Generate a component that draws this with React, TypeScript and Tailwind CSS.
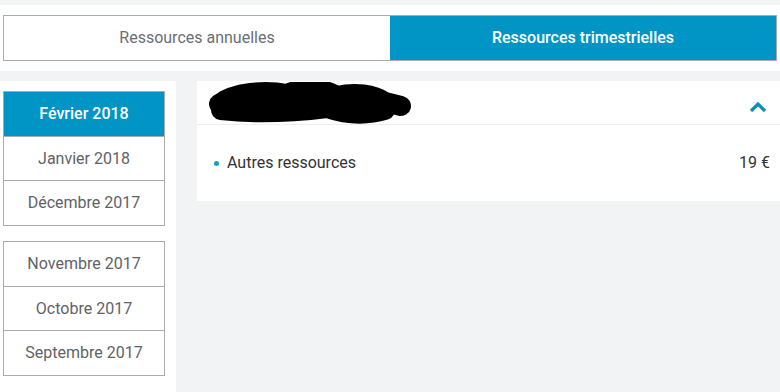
import { useState } from "react";

const groups = [
  ["Février 2018", "Janvier 2018", "Décembre 2017"],
  ["Novembre 2017", "Octobre 2017", "Septembre 2017"],
];

function Redaction() {
  return (
    <svg width="210" height="42" viewBox="0 0 210 42" className="block">
      <path
        d="M14 22 C30 10 60 8 82 12 C100 4 118 6 132 14 C150 10 168 12 180 20 L196 24 M16 28 C50 32 90 30 122 26 C140 32 160 34 180 28 M20 18 C60 16 100 20 150 20"
        stroke="#000"
        strokeWidth="20"
        strokeLinecap="round"
        fill="none"
      />
    </svg>
  );
}

export default function App() {
  const [tab, setTab] = useState("trim");
  const [month, setMonth] = useState("Février 2018");

  return (
    <div className="min-h-screen bg-[#f2f3f5] pt-[5px] font-['Roboto',sans-serif] flex flex-col">
      <div className="bg-white px-[3px] py-[10px]">
        <div className="flex h-[46px] border border-[#a9acae]">
          <button
            onClick={() => setTab("ann")}
            className={`flex-1 text-[16px] ${tab === "ann" ? "bg-[#0095c5] text-white font-medium" : "bg-white text-[#6b6e73]"}`}
          >
            Ressources annuelles
          </button>
          <button
            onClick={() => setTab("trim")}
            className={`flex-1 text-[16px] ${tab === "trim" ? "bg-[#0095c5] text-white font-medium" : "bg-white text-[#6b6e73]"}`}
          >
            Ressources trimestrielles
          </button>
        </div>
      </div>

      <div className="mt-[10px] flex flex-1 gap-[21px]">
        <div className="w-[176px] bg-white pl-[3px] pr-[11px] pt-[10px] flex flex-col gap-[15px]">
          {groups.map((g, i) => (
            <div key={i} className="border border-[#a9acae] flex flex-col">
              {g.map((m, j) => (
                <button
                  key={m}
                  onClick={() => setMonth(m)}
                  className={`${j === 0 ? "h-[44px]" : j === 1 ? "h-[44px] border-t border-[#a9acae]" : "h-[45px] border-t border-[#a9acae]"} text-[16px] ${
                    month === m ? "bg-[#0095c5] text-white font-medium" : "bg-white text-[#5f6266]"
                  }`}
                >
                  {m}
                </button>
              ))}
            </div>
          ))}
        </div>

        <div className="flex-1 self-start bg-white">
          <div className="flex h-[44px] items-center justify-between border-b border-[#eceef0] pl-[8px] pr-[13px]">
            <Redaction />
            <svg width="18" height="12" viewBox="0 0 18 12" className="mt-[8px]">
              <path d="M2 10 L9 3 L16 10" stroke="#0a8fbd" strokeWidth="3.2" fill="none" />
            </svg>
          </div>
          <div className="flex h-[76px] items-center justify-between pl-[17px] pr-[10px]">
            <div className="flex items-center gap-[8px] text-[16px] text-[#333]">
              <span className="h-[5px] w-[5px] rounded-full bg-[#1a9cc4]" />
              Autres ressources
            </div>
            <span className="text-[16px] text-[#333]">19 €</span>
          </div>
        </div>
      </div>
    </div>
  );
}
